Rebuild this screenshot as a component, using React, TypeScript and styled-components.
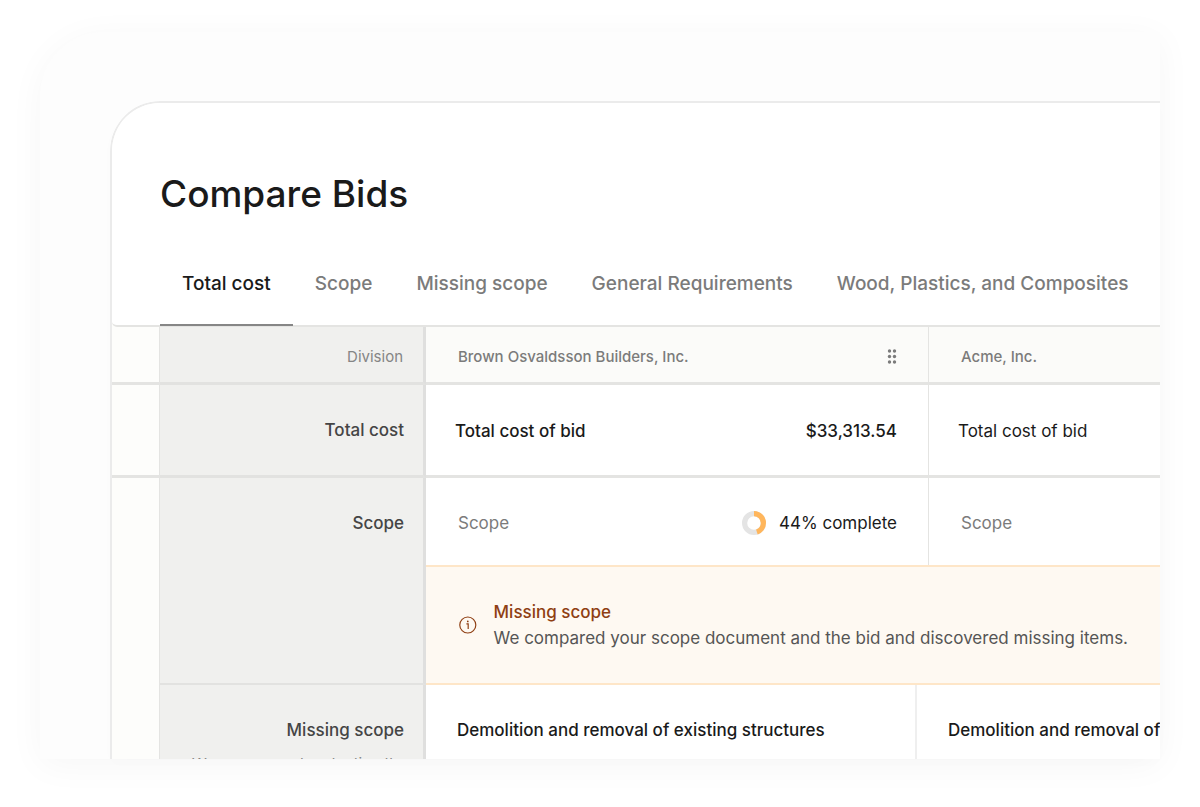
import React from "react";
import styled, { createGlobalStyle } from "styled-components";

const GlobalStyle = createGlobalStyle`
  * { box-sizing: border-box; }
  body { margin: 0; background: #fff; color: #1a1a1a; font-family: Inter, "Liberation Sans", sans-serif; }
`;

const Page = styled.div`
  height: 100vh;
  min-height: 400px;
  padding: 32px 40px 48px;
  display: flex;
`;

const Stage = styled.main`
  flex: 1;
  min-width: 0;
  padding: 69px 0 0 70px;
  border-top-left-radius: 64px;
  background: #fdfdfd;
  box-shadow: 0 6px 36px rgba(0, 0, 0, 0.04);
  display: flex;
`;

const Clip = styled.div`
  flex: 1;
  min-width: 0;
  overflow: hidden;
  border-top-left-radius: 50px;
  box-shadow: 0 4px 16px rgba(0, 0, 0, 0.01);
`;

const Panel = styled.section`
  border: solid #ebebeb;
  border-width: 2px 0 0 2px;
  border-top-left-radius: 50px;
  background: #fdfdfb;
  overflow: hidden;
`;

const Header = styled.header`
  padding: 67px 0 0 48px;
  border-bottom: 2px solid #e4e4e2;
  border-bottom-left-radius: 5px;
  background: #fff;
`;

const Title = styled.h1`
  margin: 0 0 25px;
  font-size: 37px;
  line-height: 48px;
  font-weight: 500;
`;

const Tabs = styled.nav`
  display: flex;
  margin-bottom: -1px;
`;

const Tab = styled.button<{ $active?: boolean }>`
  flex: none;
  height: 83px;
  padding: 0 22px;
  border: 0;
  border-bottom: 2px solid ${(p) => (p.$active ? "#868686" : "transparent")};
  background: none;
  font: 500 19px/28px Inter, "Liberation Sans", sans-serif;
  color: ${(p) => (p.$active ? "#1a1a1a" : "#7b7b7b")};
  white-space: nowrap;
  cursor: pointer;
`;

const Table = styled.table`
  width: 100%;
  table-layout: fixed;
  border-collapse: separate;
  border-spacing: 0;
  font-size: 17px;
  line-height: 24px;
`;

const GutterCol = styled.col` width: 48px; `;
const LabelCol = styled.col` width: 266px; `;
const BidCol = styled.col` width: 503px; `;

const Row = styled.tr<{ $height: number }>`
  height: ${(p) => p.$height}px;
`;

const Gutter = styled.td<{ $line?: boolean }>`
  padding: 0;
  border-right: 1px solid #e4e4e2;
  border-bottom: ${(p) => (p.$line ? "3px solid #e4e4e2" : "0")};
`;

const Label = styled.th<{ $line: number; $small?: boolean }>`
  padding: ${(p) => (p.$small ? "4px 20px 0 32px" : "33px 19px 0 32px")};
  border-right: 3px solid #dfdfde;
  border-bottom: ${(p) => p.$line}px solid #e2e2e0;
  background: #f0f0ee;
  color: ${(p) => (p.$small ? "#858585" : "#454545")};
  font-size: ${(p) => (p.$small ? 15 : 17)}px;
  font-weight: ${(p) => (p.$small ? 400 : 500)};
  text-align: right;
  vertical-align: ${(p) => (p.$small ? "middle" : "top")};
`;

const BidHead = styled.th<{ $divider?: boolean }>`
  padding: 4px 31px 0 32px;
  border-bottom: 3px solid #e4e4e2;
  border-right: ${(p) => (p.$divider ? "1px solid #e4e4e2" : "0")};
  background: #fbfbf9;
  color: #7b7b7b;
  font-size: 15px;
  font-weight: 500;
  text-align: left;
`;

const Bid = styled.td<{ $divider?: boolean; $line?: boolean; $inset: number; $muted?: boolean; $medium?: boolean }>`
  padding: 2px 31px 0 ${(p) => p.$inset}px;
  border-bottom: ${(p) => (p.$line ? "3px solid #e4e4e2" : "0")};
  border-right: ${(p) => (p.$divider ? "1px solid #e4e4e2" : "0")};
  background: #fff;
  color: ${(p) => (p.$muted ? "#7b7b7b" : "#1a1a1a")};
  font-weight: ${(p) => (p.$medium ? 500 : 400)};
`;

const Split = styled.div`
  display: flex;
  align-items: center;
  justify-content: space-between;
`;

const Handle = styled.button`
  display: flex;
  padding: 0;
  border: 0;
  background: none;
  color: #7b7b7b;
  cursor: grab;
`;

const Progress = styled.span`
  display: flex;
  align-items: center;
  gap: 13px;
  color: #1a1a1a;
`;

const NoticeCell = styled.td`
  padding: 0 32px;
  border: solid #fee6c8;
  border-width: 2px 0;
  background: #fef9f2;
`;

const Notice = styled.div`
  display: flex;
  align-items: center;
  gap: 16px;
`;

const NoticeText = styled.p`
  margin: 0;
  line-height: 26px;
  color: #555;
  white-space: nowrap;
`;

const NoticeTitle = styled.strong`
  display: block;
  font-weight: 500;
  color: #8f3f13;
`;

const MissingCell = styled.td`
  padding: 0;
  background: #fff;
  vertical-align: top;
`;

const MissingList = styled.div`
  display: flex;
  overflow: hidden;
`;

const MissingItem = styled.div`
  flex: none;
  width: 491px;
  height: 160px;
  padding: 33px 31px;
  border-right: 2px solid #efefef;
  font-weight: 500;
  white-space: nowrap;
`;

const Hint = styled.span`
  display: block;
  margin-top: 10px;
  font-size: 15px;
  font-weight: 400;
  color: #858585;
  white-space: nowrap;
`;

const tabs = ["Total cost", "Scope", "Missing scope", "General Requirements", "Wood, Plastics, and Composites"];
const missing = "Demolition and removal of existing structures";

const Dots = () => (
  <svg width="10" height="16" viewBox="0 0 10 16" fill="currentColor" aria-hidden="true">
    {[2, 7.5, 13].map((y) => [2.5, 7.5].map((x) => <circle key={`${x}-${y}`} cx={x} cy={y} r="1.7" />))}
  </svg>
);

const Donut = () => (
  <svg width="24" height="24" viewBox="0 0 24 24" fill="none" strokeWidth="5.2" aria-hidden="true">
    <circle cx="12" cy="12" r="9.4" stroke="#e4e4e4" />
    <circle cx="12" cy="12" r="9.4" stroke="#ffb65c" pathLength="100" strokeDasharray="45 55" transform="rotate(-90 12 12)" />
  </svg>
);

const Info = () => (
  <svg width="20" height="20" viewBox="0 0 20 20" fill="none" stroke="#8f3f13" strokeWidth="1.2" aria-hidden="true">
    <circle cx="10" cy="10" r="8.2" />
    <path d="M8.6 8.8H10.4V14" />
    <circle cx="10" cy="6.4" r="0.9" fill="#8f3f13" stroke="none" />
  </svg>
);

export default function App() {
  return (
    <Page>
      <GlobalStyle />
      <Stage>
        <Clip>
          <Panel>
            <Header>
              <Title>Compare Bids</Title>
              <Tabs>
                {tabs.map((tab, i) => (
                  <Tab key={tab} type="button" $active={i === 0}>{tab}</Tab>
                ))}
              </Tabs>
            </Header>
            <Table>
              <colgroup><GutterCol /><LabelCol /><BidCol /><col /></colgroup>
              <thead>
                <Row $height={58}>
                  <Gutter $line />
                  <Label scope="col" $line={3} $small>Division</Label>
                  <BidHead scope="col" $divider>
                    <Split>
                      Brown Osvaldsson Builders, Inc.
                      <Handle type="button" aria-label="Move column"><Dots /></Handle>
                    </Split>
                  </BidHead>
                  <BidHead scope="col">Acme, Inc.</BidHead>
                </Row>
              </thead>
              <tbody>
                <Row $height={93}>
                  <Gutter $line />
                  <Label scope="row" $line={3}>Total cost</Label>
                  <Bid $divider $line $medium $inset={29}>
                    <Split><span>Total cost of bid</span><span>$33,313.54</span></Split>
                  </Bid>
                  <Bid $line $inset={29}>Total cost of bid</Bid>
                </Row>
                <Row $height={87}>
                  <Gutter rowSpan={3} />
                  <Label scope="rowgroup" rowSpan={2} $line={2}>Scope</Label>
                  <Bid $divider $muted $inset={32}>
                    <Split>Scope<Progress><Donut />44% complete</Progress></Split>
                  </Bid>
                  <Bid $muted $inset={32}>Scope</Bid>
                </Row>
                <Row $height={120}>
                  <NoticeCell colSpan={2}>
                    <Notice>
                      <Info />
                      <NoticeText>
                        <NoticeTitle>Missing scope</NoticeTitle>
                        We compared your scope document and the bid and discovered missing items.
                      </NoticeText>
                    </Notice>
                  </NoticeCell>
                </Row>
                <Row $height={160}>
                  <Label scope="row" $line={0}>
                    Missing scope
                    <Hint>We recommend protecting the</Hint>
                  </Label>
                  <MissingCell colSpan={2}>
                    <MissingList>
                      <MissingItem>{missing}</MissingItem>
                      <MissingItem>{missing}</MissingItem>
                    </MissingList>
                  </MissingCell>
                </Row>
              </tbody>
            </Table>
          </Panel>
        </Clip>
      </Stage>
    </Page>
  );
}
